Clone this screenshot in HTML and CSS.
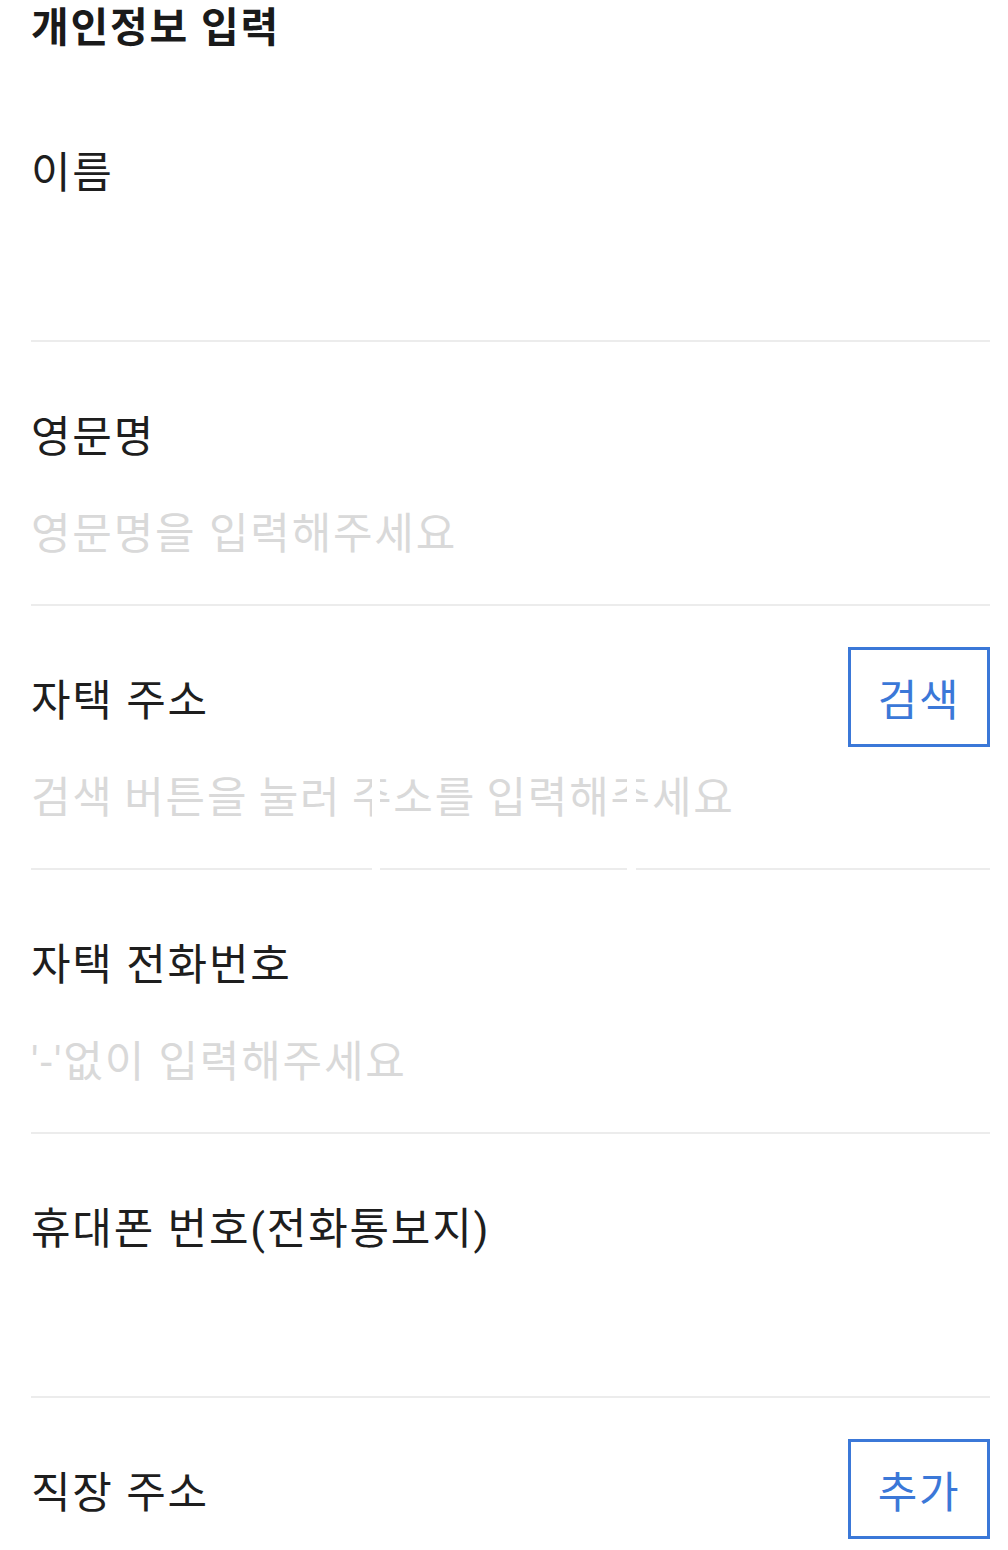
FILE: index.html
```html
<!DOCTYPE html>
<html lang="ko">
<head>
    <meta charset="UTF-8">
    <meta name="viewport" content="width=device-width, initial-scale=1.0">
    <title>개인정보 입력</title>
    <link rel="stylesheet" href="styles.css">
</head>
<body>
    <div class="container">
        <h1>개인정보 입력</h1>

        <div class="field">
            <div class="field-head">
                <label for="name">이름</label>
            </div>
            <input type="text" id="name" class="input">
        </div>

        <div class="field">
            <div class="field-head">
                <label for="engName">영문명</label>
            </div>
            <input type="text" id="engName" class="input" placeholder="영문명을 입력해주세요">
        </div>

        <div class="field">
            <div class="field-head">
                <label>자택 주소</label>
                <button type="button" class="btn-outline">검색</button>
            </div>
            <div class="addr">
                <div class="addr-seg addr-zip"><span class="addr-hint">검색 버튼을 눌러 주소를 입력해주세요</span></div>
                <div class="addr-gap"></div>
                <div class="addr-seg addr-main"></div>
                <div class="addr-gap addr-gap-wide"></div>
                <div class="addr-seg addr-detail"></div>
            </div>
        </div>

        <div class="field">
            <div class="field-head">
                <label for="homeTel">자택 전화번호</label>
            </div>
            <input type="tel" id="homeTel" class="input" placeholder="'-'없이 입력해주세요">
        </div>

        <div class="field">
            <div class="field-head">
                <label for="mobile">휴대폰 번호(전화통보지)</label>
            </div>
            <input type="tel" id="mobile" class="input">
        </div>

        <div class="field">
            <div class="field-head">
                <label>직장 주소</label>
                <button type="button" class="btn-outline">추가</button>
            </div>
            <input type="text" class="input">
        </div>
    </div>
</body>
</html>
```

FILE: styles.css
```css
body {
    margin: 0;
    background: #fff;
    font-family: Roboto, "Noto Sans CJK KR", sans-serif;
    color: #1e1e1e;
}
.container {
    padding: 0 18px 0 31px;
}
h1 {
    margin: 0;
    padding-bottom: 22px;
    font-size: 41px;
    line-height: 56px;
    font-weight: bold;
    letter-spacing: 1.8px;
    color: #1a1a1a;
}
.field {
    padding-top: 45px;
}
.field-head {
    display: flex;
    align-items: center;
    justify-content: space-between;
    height: 100px;
}
label {
    font-size: 43px;
    line-height: 62px;
    letter-spacing: 1.8px;
}
.btn-outline {
    width: 142px;
    height: 100px;
    margin-bottom: 8px;
    border: 3px solid #3b78d8;
    background: #fff;
    color: #3b78d8;
    font-family: inherit;
    font-size: 43px;
    letter-spacing: 1.8px;
    padding: 0;
}
.input {
    display: block;
    width: 100%;
    box-sizing: content-box;
    height: 62px;
    margin: 16px 0 0;
    padding: 0 0 39px;
    border: none;
    border-bottom: 2px solid #ececec;
    font-family: inherit;
    font-size: 43px;
    letter-spacing: 1.8px;
    color: #1e1e1e;
    outline: none;
}
.input::placeholder {
    color: #d9d9d9;
}
.addr {
    display: flex;
    margin-top: 16px;
}
.addr-seg {
    height: 62px;
    padding-bottom: 39px;
    border-bottom: 2px solid #ececec;
    font-size: 43px;
    line-height: 62px;
    letter-spacing: 1.8px;
}
.addr-zip {
    width: 341px;
}
.addr-main {
    width: 247px;
}
.addr-detail {
    flex: 1;
}
.addr-hint {
    color: #d9d9d9;
    white-space: nowrap;
    word-spacing: -2px;
}
.addr-gap {
    width: 8px;
    background: #fff;
}
.addr-gap-wide {
    width: 9px;
}
```
